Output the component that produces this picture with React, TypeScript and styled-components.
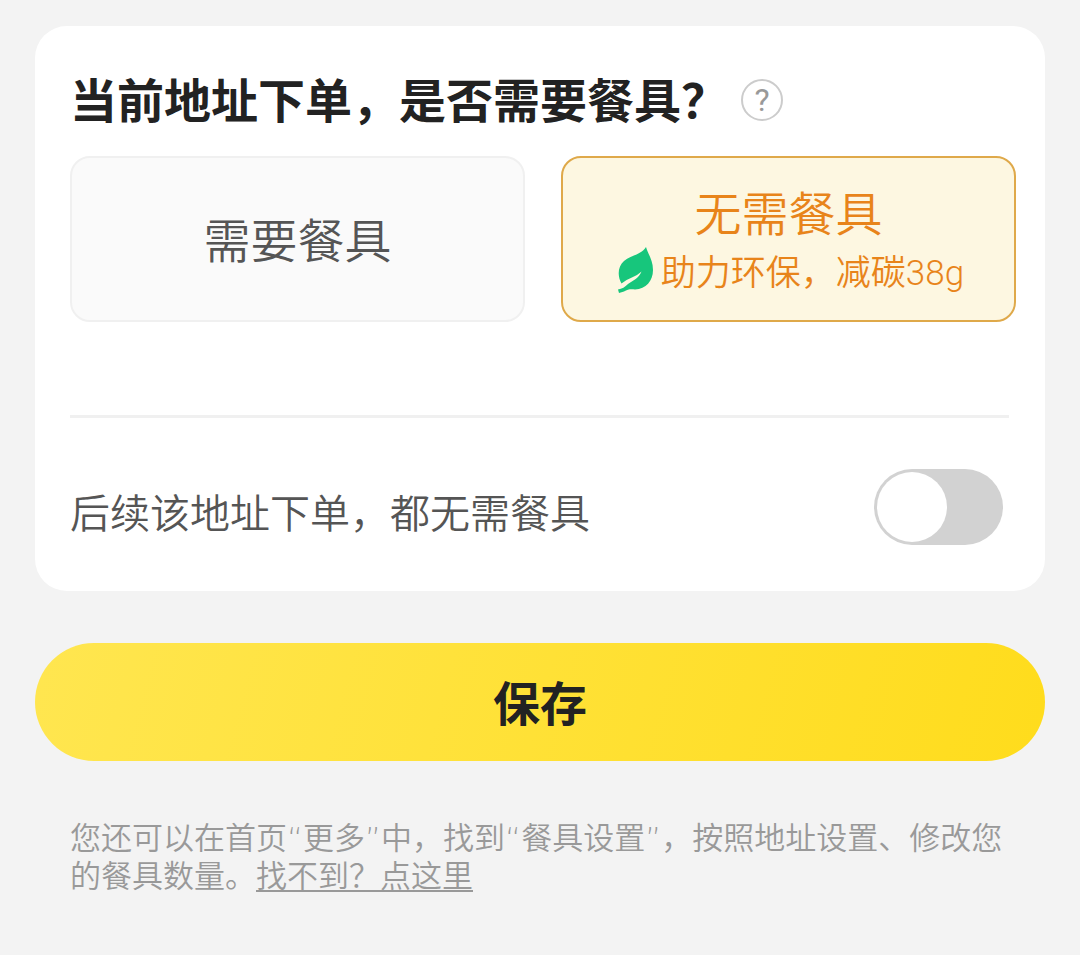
import React, { useState } from 'react';
import styled, { createGlobalStyle } from 'styled-components';

const Global = createGlobalStyle`
  * { box-sizing: border-box; }
  body {
    margin: 0;
    background: #f3f3f3;
    font-family: Roboto, "Noto Sans CJK SC", sans-serif;
    font-weight: 350;
  }
  button { font-family: inherit; font-weight: inherit; }
`;

const Page = styled.main`
  padding: 26px 35px 60px;
`;

const Card = styled.section`
  background: #ffffff;
  border-radius: 32px;
  padding: 39px 36px 44px 35px;
`;

const TitleRow = styled.div`
  display: flex;
  align-items: center;
  gap: 13px;
  height: 70px;
`;

const Title = styled.h1`
  margin: 0;
  padding-top: 4px;
  font-size: 47px;
  line-height: 70px;
  font-weight: 600;
  color: #222222;
  white-space: nowrap;
`;

const HelpButton = styled.button`
  display: grid;
  place-items: center;
  width: 42px;
  height: 42px;
  padding: 0;
  border: 2px solid #cccccc;
  border-radius: 50%;
  background: transparent;
  color: #999999;
  font-size: 32px;
  font-weight: 400;
  line-height: 38px;
`;

const Options = styled.div`
  display: grid;
  grid-template-columns: 1fr 1fr;
  gap: 36px;
  margin: 21px -7px 0 0;
`;

const Option = styled.button<{ $active: boolean }>`
  display: flex;
  flex-direction: column;
  align-items: center;
  justify-content: center;
  height: 166px;
  padding: 6px 0 0;
  border: 2px solid ${(p) => (p.$active ? '#dfa94a' : '#f0f0f0')};
  border-radius: 20px;
  background: ${(p) => (p.$active ? '#fdf7e1' : '#fafafa')};
  color: ${(p) => (p.$active ? '#e8841a' : '#555555')};
`;

const OptionName = styled.span`
  font-size: 47px;
  line-height: 60px;
`;

const OptionNote = styled.span`
  display: flex;
  align-items: center;
  gap: 8px;
  padding-left: 4px;
  font-size: 35px;
  line-height: 50px;
`;

const NoteText = styled.span`
  padding-top: 4px;
`;

const Divider = styled.hr`
  height: 3px;
  margin: 93px 0 0;
  border: 0;
  background: #f0f0f0;
`;

const SwitchRow = styled.label`
  display: flex;
  align-items: center;
  justify-content: space-between;
  height: 80px;
  margin-top: 49px;
  padding-right: 6px;
  font-size: 40px;
  line-height: 60px;
  color: #555555;
`;

const SwitchText = styled.span`
  padding-top: 16px;
`;

const Switch = styled.input`
  appearance: none;
  display: flex;
  align-items: center;
  width: 129px;
  height: 76px;
  margin: 0;
  padding: 3px;
  border-radius: 38px;
  background: #d2d2d2;

  &::before {
    content: '';
    width: 70px;
    height: 70px;
    border-radius: 50%;
    background: #ffffff;
  }

  &:checked {
    justify-content: flex-end;
    background: #ffdd22;
  }
`;

const SaveButton = styled.button`
  display: block;
  width: 100%;
  height: 118px;
  margin-top: 52px;
  padding: 6px 0 0;
  border: 0;
  border-radius: 59px;
  background: linear-gradient(105deg, #ffe650 0%, #ffdc1c 100%);
  color: #222222;
  font-size: 47px;
  font-weight: 600;
  line-height: 70px;
`;

const Hint = styled.p`
  margin: 58px 36px 0 35px;
  font-family: "DejaVu Sans", "Noto Sans CJK SC", sans-serif;
  font-size: 31px;
  line-height: 38px;
  color: #999999;
`;

const HintLink = styled.a`
  color: inherit;
  text-decoration: underline;
  text-decoration-thickness: 2px;
  text-underline-offset: 3px;
`;

const LeafIcon = styled.svg`
  width: 36px;
  height: 46px;
  margin-bottom: 4px;
`;

const Leaf = () => (
  <LeafIcon viewBox="0 0 36 46" aria-hidden="true">
    <path
      d="M29 0C31 7 36 13 36 23C36 34 29 42 18 42.500C14 42 11 42 7 44.500L2 46L1 42.500C5 42 8 40 11 37C16 33.500 22 31 24.500 24.500C19 30 11 31 4.500 36.500C0 29 1 19 7 14C14 8 24 8 29 0Z"
      fill="#17c67c"
    />
  </LeafIcon>
);

export default function App() {
  const [needed, setNeeded] = useState(false);
  const [always, setAlways] = useState(false);
  return (
    <>
      <Global />
      <Page>
        <Card>
          <TitleRow>
            <Title>当前地址下单，是否需要餐具？</Title>
            <HelpButton type="button">?</HelpButton>
          </TitleRow>
          <Options>
            <Option type="button" $active={needed} onClick={() => setNeeded(true)}>
              <OptionName>需要餐具</OptionName>
            </Option>
            <Option type="button" $active={!needed} onClick={() => setNeeded(false)}>
              <OptionName>无需餐具</OptionName>
              <OptionNote>
                <Leaf />
                <NoteText>助力环保，减碳38g</NoteText>
              </OptionNote>
            </Option>
          </Options>
          <Divider />
          <SwitchRow>
            <SwitchText>后续该地址下单，都无需餐具</SwitchText>
            <Switch type="checkbox" checked={always} onChange={(e) => setAlways(e.target.checked)} />
          </SwitchRow>
        </Card>
        <SaveButton type="button">保存</SaveButton>
        <Hint>
          您还可以在首页“更多”中，找到“餐具设置”，按照地址设置、修改您的餐具数量。<HintLink href="#find">找不到？点这里</HintLink>
        </Hint>
      </Page>
    </>
  );
}
